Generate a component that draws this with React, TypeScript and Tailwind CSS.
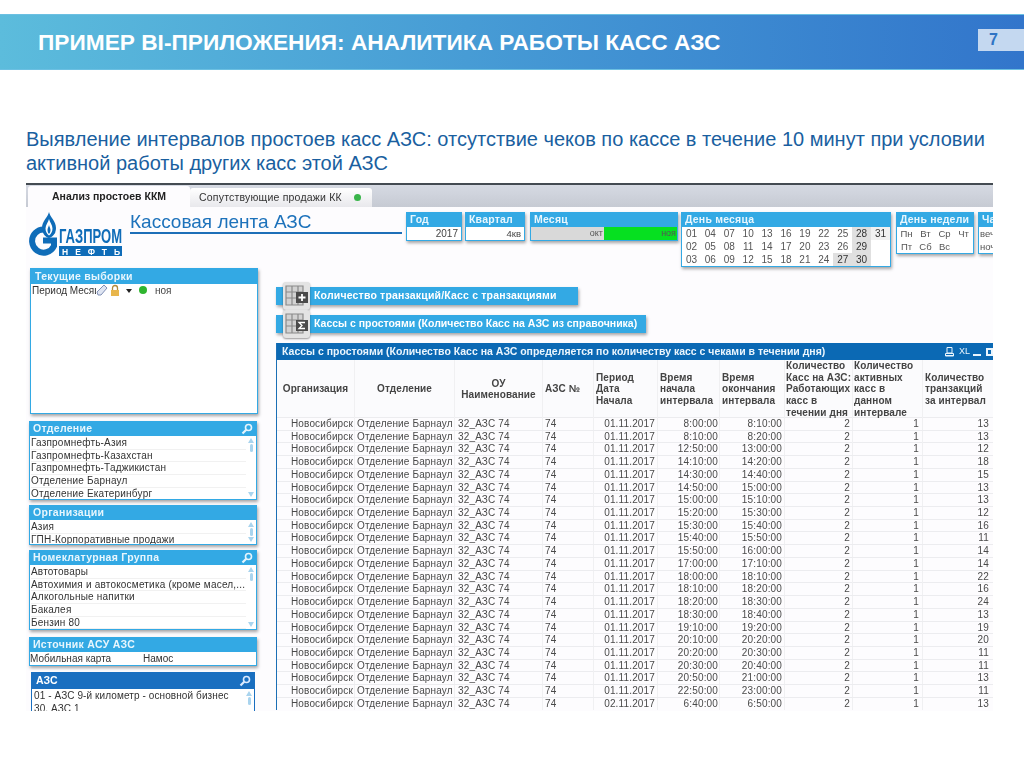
import React from 'react';

const starts = ['8:00:00', '8:10:00', '12:50:00', '14:10:00', '14:30:00', '14:50:00', '15:00:00', '15:20:00', '15:30:00', '15:40:00', '15:50:00', '17:00:00', '18:00:00', '18:10:00', '18:20:00', '18:30:00', '19:10:00', '20:10:00', '20:20:00', '20:30:00', '20:50:00', '22:50:00', '6:40:00'];
const ends = ['8:10:00', '8:20:00', '13:00:00', '14:20:00', '14:40:00', '15:00:00', '15:10:00', '15:30:00', '15:40:00', '15:50:00', '16:00:00', '17:10:00', '18:10:00', '18:20:00', '18:30:00', '18:40:00', '19:20:00', '20:20:00', '20:30:00', '20:40:00', '21:00:00', '23:00:00', '6:50:00'];
const counts = [13, 13, 12, 18, 15, 13, 13, 12, 16, 11, 14, 14, 22, 16, 24, 13, 19, 20, 11, 11, 13, 11, 13];

const days = ['01', '04', '07', '10', '13', '16', '19', '22', '25', '28', '31', '02', '05', '08', '11', '14', '17', '20', '23', '26', '29', '', '03', '06', '09', '12', '15', '18', '21', '24', '27', '30', ''];
const grayDays = ['27', '28', '29', '30'];

const cols = 'grid grid-cols-[78px_100px_88px_51px_64px_62px_65px_68px_70px_71px]';

const Search = ({ dark }: { dark?: boolean }) => (
  <svg width="12" height="12" viewBox="0 0 12 12" fill="none" stroke={dark ? '#dbeafe' : '#e6f5fd'} strokeWidth="1.6">
    <circle cx="7.5" cy="4.5" r="3" />
    <path d="M5.2 6.8 1.5 10.5" strokeWidth="2.2" />
  </svg>
);

const Scroll = ({ thumb = 'h-[8px]' }: { thumb?: string }) => (
  <div className="flex w-[10px] shrink-0 flex-col items-center justify-between bg-white py-[2px]">
    <div className="h-0 w-0 border-x-[3px] border-b-[5px] border-x-transparent border-b-[#a9d4ee]" />
    <div className={`w-[3px] rounded-sm bg-[#a9d4ee] ${thumb} mt-[1px] mb-auto`} />
    <div className="h-0 w-0 border-x-[3px] border-t-[5px] border-x-transparent border-t-[#a9d4ee]" />
  </div>
);

const ListBox = ({ title, items, search, h }: { title: string; items: string[]; search?: boolean; h: string }) => (
  <div className="w-[228px] border border-[#33a9e4] bg-white shadow-[1px_2px_3px_rgba(0,0,0,0.35)]">
    <div className="flex h-[14px] items-center justify-between bg-[#33a9e4] pl-[3px] pr-[3px] text-[10.5px] font-bold tracking-[0.3px] text-[#e8f6fd]">
      <span>{title}</span>
      {search && <Search />}
    </div>
    <div className={`flex ${h} overflow-hidden`}>
      <div className="min-w-0 flex-1 pt-[1px] pl-[1px] text-[10px] leading-[12px] text-[#333]">
        {items.map((t) => (
          <div key={t} className="h-[12.7px] truncate border-b border-[#f1f1f1] tracking-[0.2px]">{t}</div>
        ))}
      </div>
      <Scroll />
    </div>
  </div>
);

const Filter = ({ title, w, children }: { title: string; w: string; children: React.ReactNode }) => (
  <div className={`${w} shrink-0 self-start border-x border-b border-[#33a9e4] bg-white shadow-[1px_2px_3px_rgba(0,0,0,0.35)]`}>
    <div className="flex h-[15px] items-center bg-[#33a9e4] pl-[3px] text-[10.5px] font-bold tracking-[0.2px] whitespace-nowrap text-[#e8f6fd]">{title}</div>
    {children}
  </div>
);

const Logo = () => (
  <svg width="94" height="44" viewBox="0 0 94 44" className="shrink-0">
    <path d="M24 22.5A11.5 11.5 0 1 0 25 34V28.5H14" fill="none" stroke="#0f6cb8" strokeWidth="6" />
    <path d="M20 0c1 5 7 9 7 16 0 5-3 9-7 10-4-1-7-5-7-10 0-7 6-11 7-16z" fill="#0f6cb8" />
    <path d="M20 7c.6 3 3.5 6 3.5 9.500 0 3-1.500 5.500-3.500 7-2-1.500-3.500-4-3.500-7C16.500 13 19.400 10 20 7z" fill="#fff" />
    <path d="M20 13c.3 2 1.500 3 1.500 5 0 2-.8 3-1.500 4-.7-1-1.500-2-1.500-4 0-2 1.200-3 1.500-5z" fill="#0f6cb8" />
    <text x="30" y="31" fontSize="20" fontWeight="700" fill="#0f6cb8" textLength="63" lengthAdjust="spacingAndGlyphs">ГАЗПРОМ</text>
    <rect x="30" y="34" width="63" height="10" fill="#0f6cb8" />
    <text x="33" y="42.500" fontSize="8.500" fontWeight="700" fill="#fff" textLength="58" lengthAdjust="spacing">НЕФТЬ</text>
  </svg>
);

const TableIcon = ({ sigma }: { sigma?: boolean }) => (
  <div className="absolute top-[-5px] left-[7px] flex h-[28px] w-[27px] items-center justify-center rounded-[3px] bg-[#e3e3e3] shadow-[0_1px_2px_rgba(0,0,0,0.4)]">
    <svg width="24" height="24" viewBox="0 0 24 24">
      <path d="M1 2h17v19H1zM7 2v19M13 2v19M1 8h17M1 14h17" fill="#d2d2d2" stroke="#8a8a8a" strokeWidth="1.2" />
      <rect x="11" y="8" width="12" height="11" fill="#4a4a4a" />
      {sigma ? (
        <path d="M20 10.500h-6l3 3-3 3h6" fill="none" stroke="#fff" strokeWidth="1.300" />
      ) : (
        <path d="M17 10v7M13.500 13.500h7" fill="none" stroke="#fff" strokeWidth="1.800" />
      )}
    </svg>
  </div>
);

const ActionButton = ({ label, w, sigma }: { label: string; w: string; sigma?: boolean }) => (
  <div className={`relative flex h-[18px] ${w} items-center bg-[#33a9e4] pl-[38px] text-[10.5px] font-bold whitespace-nowrap text-white shadow-[1px_2px_3px_rgba(0,0,0,0.35)]`}>
    <TableIcon sigma={sigma} />
    {label}
  </div>
);

const headCell = 'flex items-center border-r border-[#f0f0f2] text-[10px] leading-[11.7px] font-bold tracking-[0.1px] whitespace-nowrap text-[#444]';

const DataTable = () => (
  <div className="w-[717px] border-l border-[#1b6fb5]">
    <div className="flex h-[17px] items-center justify-between bg-[#0b69b4] pl-[5px] text-[10.5px] font-bold whitespace-nowrap text-[#eaf5fd]">
      <span>Кассы с простоями (Количество Касс на АЗС определяется по количеству касс с чеками в течении дня)</span>
      <span className="flex items-center gap-[5px] text-[9px] font-normal">
        <svg width="9" height="10" viewBox="0 0 9 10" fill="none" stroke="#eaf5fd"><path d="M2 .500h5v5.500H2zM.500 8.500h8" /><path d="M.500 6.500h8v2.500h-8z" /></svg>
        <span className="w-[9px]">XL</span>
        <span className="mt-[7px] h-[2px] w-[8px] bg-[#eaf5fd]" />
        <span className="h-[8px] w-[7px] border-2 border-[#eaf5fd]" />
      </span>
    </div>
    <div className={`${cols} h-[57px] bg-[#fbfbfd]`}>
      <div className={`${headCell} justify-center`}>Организация</div>
      <div className={`${headCell} justify-center`}>Отделение</div>
      <div className={`${headCell} justify-center text-center`}>ОУ<br />Наименование</div>
      <div className={`${headCell} pl-[2px]`}>АЗС №</div>
      <div className={`${headCell} pl-[2px]`}>Период<br />Дата<br />Начала</div>
      <div className={`${headCell} pl-[2px]`}>Время<br />начала<br />интервала</div>
      <div className={`${headCell} pl-[2px]`}>Время<br />окончания<br />интервала</div>
      <div className={`${headCell} pl-[1px]`}>Количество<br />Касс на АЗС:<br />Работающих<br />касс в<br />течении дня</div>
      <div className={`${headCell} pl-[1px]`}>Количество<br />активных<br />касс в<br />данном<br />интервале</div>
      <div className={`${headCell} pl-[2px]`}>Количество<br />транзакций<br />за интервал</div>
    </div>
    {starts.map((s, i) => (
      <div key={i} className={`${cols} h-[12.73px] border-t border-[#ececef] text-[10px] leading-[12px] tracking-[0.15px] text-[#4a4a4a]`}>
        <div className="border-r border-[#f0f0f2] pr-[1px] text-right">Новосибирск</div>
        <div className="border-r border-[#f0f0f2] pl-[2px] whitespace-nowrap">Отделение Барнаул</div>
        <div className="border-r border-[#f0f0f2] pl-[3px]">32_АЗС 74</div>
        <div className="border-r border-[#f0f0f2] pl-[2px]">74</div>
        <div className="border-r border-[#f0f0f2] pr-[2px] text-right">{i === 22 ? '02.11.2017' : '01.11.2017'}</div>
        <div className="border-r border-[#f0f0f2] pr-[1px] text-right">{s}</div>
        <div className="border-r border-[#f0f0f2] pr-[2px] text-right">{ends[i]}</div>
        <div className="border-r border-[#f0f0f2] pr-[2px] text-right">2</div>
        <div className="border-r border-[#f0f0f2] pr-[3px] text-right">1</div>
        <div className="pr-[5px] text-right">{counts[i]}</div>
      </div>
    ))}
  </div>
);

const App: React.FC = () => {
  return (
    <div className="h-[767px] w-[1024px] overflow-hidden bg-white pt-[14px] font-['Liberation_Sans',sans-serif]">
      <header className="flex h-[56px] items-center justify-between border-y border-[#6cc0e2] bg-gradient-to-r from-[#5cbcdc] to-[#3275cb] pl-[38px]">
        <h1 className="mt-[1px] text-[22.7px] font-bold text-white">ПРИМЕР BI-ПРИЛОЖЕНИЯ: АНАЛИТИКА РАБОТЫ КАСС АЗС</h1>
        <div className="mb-[4px] flex h-[22px] w-[46px] items-center justify-center bg-[#c4d8f0] pr-[15px] text-[16px] font-bold text-[#2f74c4]">7</div>
      </header>

      <p className="mt-[57px] pl-[26px] text-[20px] leading-[24px] whitespace-nowrap text-[#1a5f9f]">
        Выявление интервалов простоев касс АЗС: отсутствие чеков по кассе в течение 10 минут при условии<br />
        активной работы других касс этой АЗС
      </p>

      <div className="mt-[8px] ml-[26px] h-[528px] w-[967px] overflow-hidden border-t-2 border-[#444b52] bg-[#fdfcfe] blur-[0.3px]">
        {/* Tabs */}
        <div className="flex h-[22px] items-end bg-gradient-to-b from-[#d6dae3] to-[#c6cad3] pl-[2px]">
          <div className="flex h-[21px] w-[162px] items-center justify-center rounded-t-[3px] bg-[#fdfcfe] text-[10.5px] font-bold text-[#222]">Анализ простоев ККМ</div>
          <div className="flex h-[19px] w-[182px] items-center gap-[12px] rounded-t-[3px] bg-gradient-to-b from-[#fff] to-[#e8e8ec] pl-[9px] text-[10.5px] tracking-[0.2px] text-[#333]">
            Сопутствующие продажи КК
            <span className="h-[7px] w-[7px] rounded-full bg-[#39b54a]" />
          </div>
        </div>

        {/* Logo, title, filters */}
        <div className="flex h-[61px] pt-[5px] pl-[3px]">
          <Logo />
          <div className="ml-[7px] w-[272px] shrink-0">
            <div className="h-[22px] border-b-[2px] border-[#1d6fb8] text-[19px] leading-[19px] text-[#1d72bb]">Кассовая лента АЗС</div>
          </div>
          <div className="ml-[4px] flex gap-[3px]">
            <Filter title="Год" w="w-[56px]">
              <div className="h-[13px] pr-[3px] text-right text-[10px] leading-[13px] text-[#444]">2017</div>
            </Filter>
            <Filter title="Квартал" w="w-[60px]">
              <div className="h-[13px] pr-[3px] text-right text-[9.500px] leading-[13px] text-[#444]">4кв</div>
            </Filter>
            <Filter title="Месяц" w="ml-[2px] w-[148px]">
              <div className="flex h-[13px] text-right text-[9px] leading-[13px] text-[#555]">
                <div className="w-[74px] bg-[#d9d9d9] pr-[1px]">окт</div>
                <div className="w-[74px] bg-[#06e020] pr-[1px]">ноя</div>
              </div>
            </Filter>
            <Filter title="День месяца" w="w-[210px]">
              <div className="grid grid-cols-11 text-center text-[10px] leading-[13px] text-[#555]">
                {days.map((d, i) => (
                  <div key={i} className={`h-[13px] ${grayDays.includes(d) ? 'bg-[#e0e0e0] text-[#333]' : d === '31' ? 'bg-[#f1f1f1] text-[#333]' : ''}`}>{d}</div>
                ))}
              </div>
            </Filter>
            <Filter title="День недели" w="ml-[2px] w-[78px]">
              <div className="grid grid-cols-4 text-center text-[9.500px] leading-[13px] text-[#555]">
                {['Пн', 'Вт', 'Ср', 'Чт', 'Пт', 'Сб', 'Вс', ''].map((d, i) => (
                  <div key={i} className="h-[13px]">{d}</div>
                ))}
              </div>
            </Filter>
            <Filter title="Часть дня" w="ml-[1px] w-[60px]">
              <div className="pl-[1px] text-[9.500px] leading-[13px] text-[#555]">
                <div className="h-[13px]">вечер</div>
                <div className="h-[13px]">ночь</div>
              </div>
            </Filter>
          </div>
        </div>

        <div className="flex">
          {/* Left column */}
          <div className="flex w-[250px] shrink-0 flex-col gap-[5px] pl-[3px]">
            <div className="mb-[2px] ml-[1px] w-[228px] border border-[#33a9e4] bg-white shadow-[1px_2px_3px_rgba(0,0,0,0.35)]">
              <div className="flex h-[15px] items-center bg-[#33a9e4] pl-[4px] text-[10.5px] font-bold tracking-[0.3px] text-[#e8f6fd]">Текущие выборки</div>
              <div className="flex h-[129px] items-start gap-[2px] text-[10px] leading-[13px] text-[#333]">
                <span className="w-[65px] overflow-hidden pl-[1px] whitespace-nowrap">Период Месяц</span>
                <svg width="12" height="12" viewBox="0 0 12 12" className="-ml-[2px] shrink-0"><path d="M1 8 8 1l3 3-6 7H2z" fill="#dfe5f2" stroke="#7f8fb5" /></svg>
                <svg width="10" height="12" viewBox="0 0 10 12" className="shrink-0"><path d="M2.500 6V4a2.500 2.500 0 0 1 5 0v2" fill="none" stroke="#b08a3c" strokeWidth="1.300" /><rect x="1" y="6" width="8" height="6" fill="#e8b64c" /></svg>
                <span className="mt-[5px] ml-[4px] h-0 w-0 border-x-[3.500px] border-t-[4px] border-x-transparent border-t-[#222]" />
                <span className="mt-[2px] ml-[5px] h-[8px] w-[8px] rounded-full bg-[#2fb52f]" />
                <span className="ml-[6px] text-[#444]">ноя</span>
              </div>
            </div>
            <ListBox title="Отделение" search h="h-[63px]" items={['Газпромнефть-Азия', 'Газпромнефть-Казахстан', 'Газпромнефть-Таджикистан', 'Отделение Барнаул', 'Отделение Екатеринбург']} />
            <ListBox title="Организации" h="h-[24px]" items={['Азия', 'ГПН-Корпоративные продажи']} />
            <ListBox title="Номеклатурная Группа" search h="h-[64px]" items={['Автотовары', 'Автохимия и автокосметика (кроме масел,...', 'Алкогольные напитки', 'Бакалея', 'Бензин 80']} />
            <div className="mt-[2px] w-[228px] border border-[#33a9e4] bg-white shadow-[1px_2px_3px_rgba(0,0,0,0.35)]">
              <div className="flex h-[14px] items-center bg-[#33a9e4] pl-[3px] text-[10.5px] font-bold tracking-[0.3px] text-[#e8f6fd]">Источник АСУ АЗС</div>
              <div className="grid h-[13px] grid-cols-2 text-[10px] leading-[13px] text-[#333]">
                <span>Мобильная карта</span>
                <span>Намос</span>
              </div>
            </div>
            <div className="mt-[1px] ml-[2px] w-[224px] border border-[#1a6fc0] bg-white">
              <div className="flex h-[16px] items-center justify-between bg-[#1a6fc0] pr-[3px] pl-[4px] text-[10.5px] font-bold text-white">
                АЗС
                <Search dark />
              </div>
              <div className="flex h-[30px]">
                <div className="min-w-0 flex-1 pl-[2px] text-[10px] leading-[13px] tracking-[0.1px] text-[#333]">
                  <div>01 - АЗС 9-й километр - основной бизнес</div>
                  <div>30. АЗС 1</div>
                </div>
                <Scroll />
              </div>
            </div>
          </div>

          {/* Right column */}
          <div className="flex min-w-0 flex-1 flex-col">
            <div className="pt-[19px]">
              <div className="tracking-[0.18px]">
                <ActionButton label="Количество транзакций/Касс с транзакциями" w="w-[302px]" />
              </div>
            </div>
            <div className="pt-[10px]">
              <ActionButton label="Кассы с простоями (Количество Касс на АЗС из справочника)" w="w-[370px]" sigma />
            </div>
            <div className="pt-[10px]">
              <DataTable />
            </div>
          </div>
        </div>
      </div>
    </div>
  );
};

export default App;
